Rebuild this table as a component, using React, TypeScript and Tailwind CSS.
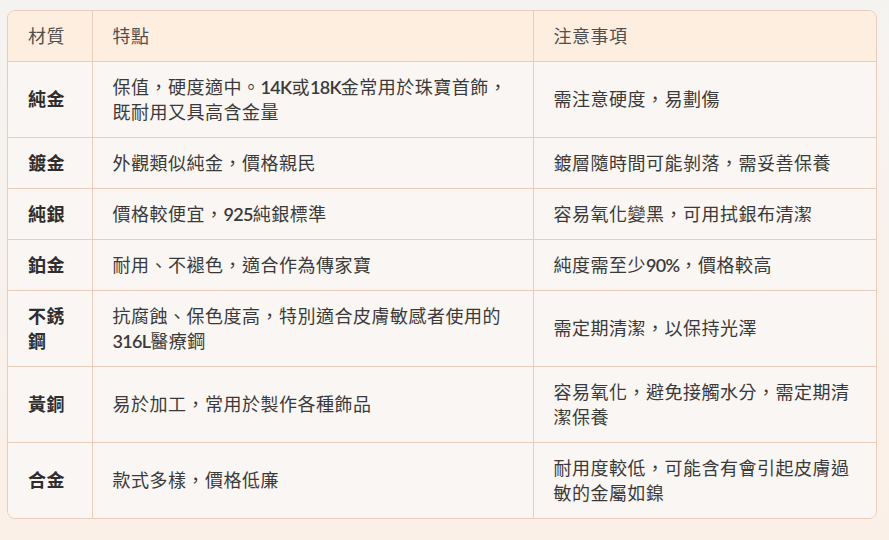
import React from 'react';

type Row = { name: string; feature: React.ReactNode; note: React.ReactNode };

const L = ({ children }: { children: React.ReactNode }) => (
    <span className="font-semibold tracking-[-0.7px]">{children}</span>
);

const rows: Row[] = [
    {
        name: '純金',
        feature: <>保值，硬度適中。<L>14K</L>或<L>18K</L>金常用於珠寶首飾，既耐用又具高含金量</>,
        note: '需注意硬度，易劃傷',
    },
    { name: '鍍金', feature: '外觀類似純金，價格親民', note: '鍍層隨時間可能剝落，需妥善保養' },
    { name: '純銀', feature: <>價格較便宜，<L>925</L>純銀標準</>, note: '容易氧化變黑，可用拭銀布清潔' },
    { name: '鉑金', feature: '耐用、不褪色，適合作為傳家寶', note: <>純度需至少<L>90%</L>，價格較高</> },
    {
        name: '不銹鋼',
        feature: <>抗腐蝕、保色度高，特別適合皮膚敏感者使用的<L>316L</L>醫療鋼</>,
        note: '需定期清潔，以保持光澤',
    },
    { name: '黃銅', feature: '易於加工，常用於製作各種飾品', note: '容易氧化，避免接觸水分，需定期清潔保養' },
    { name: '合金', feature: '款式多樣，價格低廉', note: '耐用度較低，可能含有會引起皮膚過敏的金屬如鎳' },
];

const App: React.FC = () => {
    return (
        <div
            className="min-h-[540px] w-[889px] bg-gradient-to-b from-[#f5f3f1] to-[#fbf0e7] pl-[7px] pt-[10px]"
            style={{ fontFamily: '"Lato", "Noto Sans CJK TC", sans-serif' }}
        >
            <div className="w-[870px] overflow-hidden rounded-lg border border-[#e8cdbc]">
                <table className="w-full table-fixed border-collapse text-[18px] leading-[25px] tracking-[0.5px] text-[#3a3a3a]">
                    <colgroup>
                        <col className="w-[84px]" />
                        <col className="w-[441px]" />
                        <col />
                    </colgroup>
                    <thead>
                        <tr className="bg-[#fdeee0] text-[#505050]">
                            <th className="px-5 py-[12.5px] text-left font-normal">材質</th>
                            <th className="border-l border-[#e8cdbc] px-5 py-[12.5px] text-left font-normal">特點</th>
                            <th className="border-l border-[#e8cdbc] px-5 py-[12.5px] text-left font-normal">注意事項</th>
                        </tr>
                    </thead>
                    <tbody className="bg-[#faf6f3]">
                        {rows.map((r) => (
                            <tr key={r.name} className="border-t border-[#e8cdbc]">
                                <td className="px-5 py-[12.5px] align-middle font-bold text-[#2e2e2e]">{r.name}</td>
                                <td className="border-l border-[#e8cdbc] px-5 py-[12.5px] align-middle">{r.feature}</td>
                                <td className="border-l border-[#e8cdbc] px-5 py-[12.5px] align-middle">{r.note}</td>
                            </tr>
                        ))}
                    </tbody>
                </table>
            </div>
        </div>
    );
};

export default App;
